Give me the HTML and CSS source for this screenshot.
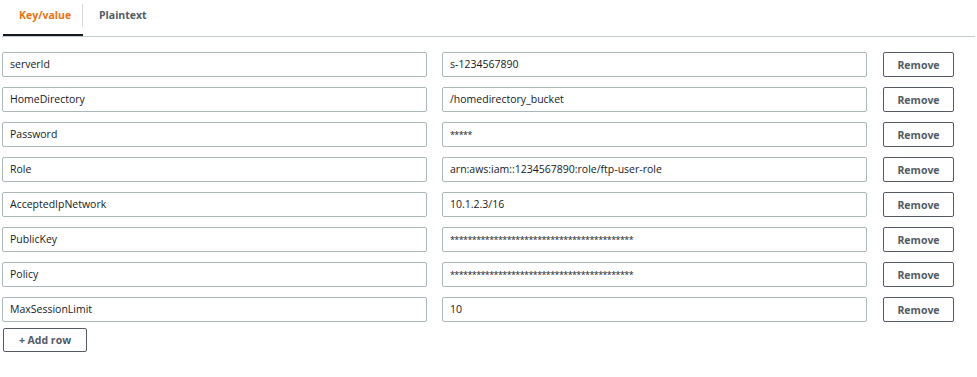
FILE: index.html
```html
<!DOCTYPE html>
<html lang="en">
<head>
    <meta charset="UTF-8">
    <title>Key/value</title>
    <link rel="stylesheet" href="styles.css">
</head>
<body>
    <div class="editor">
        <div class="tabs">
            <div class="tab active">Key/value</div>
            <div class="tab">Plaintext</div>
        </div>

        <div class="rows">
            <div class="row">
                <div class="field">serverId</div>
                <div class="field">s-1234567890</div>
                <button class="btn">Remove</button>
            </div>
            <div class="row">
                <div class="field">HomeDirectory</div>
                <div class="field">/homedirectory_bucket</div>
                <button class="btn">Remove</button>
            </div>
            <div class="row">
                <div class="field">Password</div>
                <div class="field stars">*****</div>
                <button class="btn">Remove</button>
            </div>
            <div class="row">
                <div class="field">Role</div>
                <div class="field">arn:aws:iam::1234567890:role/ftp-user-role</div>
                <button class="btn">Remove</button>
            </div>
            <div class="row">
                <div class="field">AcceptedIpNetwork</div>
                <div class="field">10.1.2.3/16</div>
                <button class="btn">Remove</button>
            </div>
            <div class="row">
                <div class="field">PublicKey</div>
                <div class="field stars">******************************************</div>
                <button class="btn">Remove</button>
            </div>
            <div class="row">
                <div class="field">Policy</div>
                <div class="field stars">******************************************</div>
                <button class="btn">Remove</button>
            </div>
            <div class="row">
                <div class="field">MaxSessionLimit</div>
                <div class="field">10</div>
                <button class="btn">Remove</button>
            </div>
        </div>

        <button class="btn add">+ Add row</button>
    </div>
</body>
</html>
```

FILE: styles.css
```css
body {
    margin: 0;
    font-family: "Open Sans", "Liberation Sans", Arial, sans-serif;
    font-size: 10.5px;
    color: #16191f;
    background: #fff;
}
.editor {
    padding: 0 2px;
}
.tabs {
    display: flex;
    border-bottom: 1px solid #c4cccc;
    height: 36px;
}
.tab {
    position: relative;
    padding: 0 16px;
    line-height: 30px;
    font-weight: bold;
    font-size: 10.5px;
    color: #545b64;
}
.tab.active {
    color: #ec7211;
    width: 49px;
    padding: 0 15px 0 16px;
    text-align: center;
    border-bottom: 2px solid #16191f;
    margin-left: 1px;
    height: 34px;
}
.tab.active::after {
    content: "";
    position: absolute;
    right: 0;
    top: 4px;
    height: 23px;
    border-right: 1px solid #d5dbdb;
}
.rows {
    display: flex;
    flex-direction: column;
    gap: 10px;
    margin-top: 15px;
}
.row {
    display: grid;
    grid-template-columns: 425px 425px 72px;
    column-gap: 15px;
}
.row .btn {
    margin-left: 1px;
}
.field {
    box-sizing: border-box;
    height: 25px;
    line-height: 23px;
    padding: 0 7px;
    border: 1px solid #aab7b8;
    border-radius: 2px;
    white-space: nowrap;
    overflow: hidden;
}
.stars {
    font-size: 9px;
    letter-spacing: -0.6px;
}
.btn {
    box-sizing: border-box;
    height: 25px;
    background: #fff;
    border: 1px solid #545b64;
    border-radius: 2px;
    font-family: inherit;
    font-size: 10.5px;
    font-weight: bold;
    color: #545b64;
    padding: 0;
    cursor: pointer;
}
.add {
    width: 84px;
    margin: 6px 0 0 1px;
    height: 24px;
}
```
